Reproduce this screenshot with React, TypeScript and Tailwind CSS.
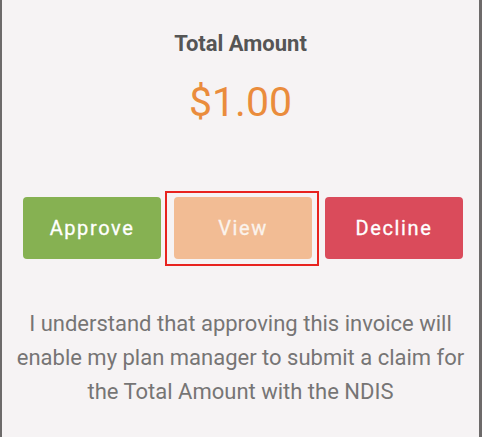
import React from 'react';

const BUTTONS = [
  { label: 'Approve', className: 'bg-[#86b152] text-white' },
  { label: 'View', className: 'bg-[#f2bc94] text-[#fbf3ec]', selected: true },
  { label: 'Decline', className: 'bg-[#da4b5b] text-white' },
];

export default function App() {
  return (
    <div className="w-[482px] h-[437px] overflow-hidden bg-[#f6f3f4] border-l-2 border-r-[3px] border-[#6d6a6a] font-['Roboto',sans-serif]">
      <div className="pt-[29px] text-center">
        <div className="text-[22px] leading-[30px] font-bold text-[#555555]">Total Amount</div>
        <div className="mt-[18px] text-[41px] leading-[50px] text-[#ea8c3c]">$1.00</div>
      </div>

      <div className="mt-[70px] ml-[21px] flex gap-[13px]">
        {BUTTONS.map((b) => (
          <div key={b.label} className={b.selected ? 'relative' : ''}>
            {b.selected && (
              <div className="absolute -left-[9px] -top-[6px] -right-[7px] -bottom-[7px] border-2 border-[#e8231f]" />
            )}
            <button
              className={`relative w-[138px] h-[62px] rounded-[4px] text-[20px] font-normal tracking-[1.6px] [-webkit-text-stroke:0.3px_currentColor] ${b.className}`}
            >
              {b.label}
            </button>
          </div>
        ))}
      </div>

      <p className="mt-[48px] px-[8px] text-center text-[22px] leading-[34px] text-[#767575]">
        I understand that approving this invoice will enable my plan manager to submit a claim for the Total Amount with the
        NDIS
      </p>
    </div>
  );
}
